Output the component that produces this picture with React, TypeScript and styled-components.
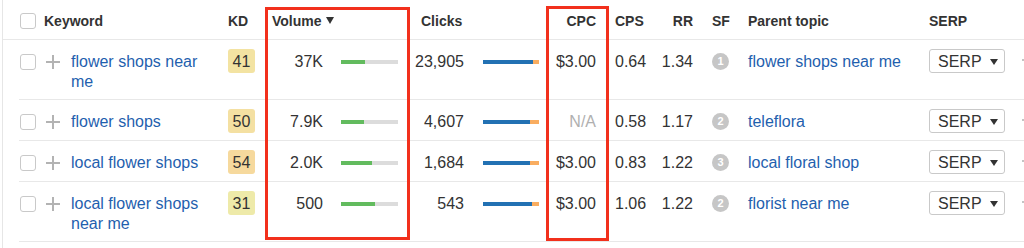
import React from "react";
import styled, { createGlobalStyle } from "styled-components";

const GlobalStyle = createGlobalStyle`
  body {
    margin: 0;
    background: #fff;
    font-family: "Liberation Sans", Arial, sans-serif;
    color: #333;
  }
`;

const COLS =
  "26px 25px 157px 37px 145px 136px 63px 46px 40px 53px 181px 85px 1fr";

const Page = styled.div`
  position: relative;
  width: 1022px;
  height: 248px;
  margin-left: 2px;
  border-left: 1px solid #e6e6e6;
  overflow: hidden;
`;

const HeaderRow = styled.div`
  display: grid;
  grid-template-columns: ${COLS};
  align-items: center;
  height: 40px;
  padding: 2px 0 0 17px;
  box-sizing: border-box;
  border-bottom: 1px solid #e8e8e8;
  font-size: 14px;
  font-weight: bold;
  color: #333;
`;

type HeadProps = { $pl?: number; $pr?: number; $right?: boolean; $span?: number };

const Head = styled.div<HeadProps>`
  padding-left: ${(p) => p.$pl ?? 0}px;
  padding-right: ${(p) => p.$pr ?? 0}px;
  text-align: ${(p) => (p.$right ? "right" : "left")};
  grid-column: ${(p) => (p.$span ? `span ${p.$span}` : "auto")};
  white-space: nowrap;
`;

const SortArrow = styled.span`
  display: inline-block;
  margin-left: 4px;
  width: 0;
  height: 0;
  border-left: 4.5px solid transparent;
  border-right: 4.5px solid transparent;
  border-top: 7px solid #333;
  vertical-align: 2px;
`;

const Body = styled.div`
  margin-left: 16px;
`;

const Row = styled.div`
  display: grid;
  grid-template-columns: ${COLS};
  align-items: start;
  padding: 9px 0 7px 1px;
  border-bottom: 1px solid #e8e8e8;
  font-size: 16px;
  line-height: 20px;
  color: #333;
`;

const Cell = styled.div<HeadProps>`
  padding-top: 3px;
  padding-left: ${(p) => p.$pl ?? 0}px;
  padding-right: ${(p) => p.$pr ?? 0}px;
  text-align: ${(p) => (p.$right ? "right" : "left")};
  white-space: nowrap;
`;

const Checkbox = styled.span<{ $head?: boolean }>`
  display: block;
  width: 14px;
  height: 14px;
  margin-top: ${(p) => (p.$head ? 0 : 2)}px;
  border: 1px solid #c9c9c9;
  border-radius: 3px;
  background: #fff;
`;

const PlusIcon = () => (
  <svg width="14" height="14" viewBox="0 0 14 14" style={{ display: "block", marginTop: 3 }}>
    <path d="M7 0v14M0 7h14" stroke="#b3b3b3" strokeWidth="2" fill="none" />
  </svg>
);

const Link = styled.a`
  color: #1f5fae;
  text-decoration: none;
  white-space: normal;
  display: block;
  padding-top: 3px;
  padding-right: 10px;
`;

const Badge = styled.span<{ $bg: string }>`
  display: inline-block;
  width: 27px;
  height: 24px;
  line-height: 25px;
  text-align: center;
  border-radius: 3px;
  background: ${(p) => p.$bg};
  color: #333;
`;

const Metric = styled.div<{ $numWidth: number; $gap: number }>`
  display: flex;
  align-items: center;
  height: 20px;
  margin-top: 3px;
  gap: ${(p) => p.$gap}px;
  & > span:first-child {
    width: ${(p) => p.$numWidth}px;
    text-align: right;
  }
`;

const Track = styled.div<{ $w: number; $bg: string }>`
  display: flex;
  width: ${(p) => p.$w}px;
  height: 4px;
  background: ${(p) => p.$bg};
  margin-top: 0px;
`;

const Fill = styled.div<{ $color: string }>`
  height: 100%;
  background: ${(p) => p.$color};
`;

const NA = styled.span`
  color: #b0b0b0;
`;

const Circle = styled.span`
  display: flex;
  align-items: center;
  justify-content: center;
  flex: none;
  width: 17px;
  height: 17px;
  margin-top: 4px;
  border-radius: 50%;
  background: #c6c6c6;
  color: #fff;
  font-size: 11px;
  font-weight: bold;
  line-height: 17px;
`;

const SerpButton = styled.button`
  display: flex;
  align-items: center;
  gap: 8px;
  width: 76px;
  height: 24px;
  padding: 1px 0 0 8px;
  border: 1px solid #c9c9c9;
  border-radius: 3px;
  background: #fff;
  font-family: "Liberation Sans", Arial, sans-serif;
  font-size: 16px;
  color: #333;
`;

const Caret = styled.span`
  width: 0;
  height: 0;
  border-left: 4.5px solid transparent;
  border-right: 4.5px solid transparent;
  border-top: 6px solid #333;
`;

const EdgeMark = styled.span`
  display: block;
  width: 4px;
  height: 2px;
  margin: 10px 0 0 8px;
  background: #c4c4c4;
`;

const Highlight = styled.div<{ $left: number; $top: number; $w: number; $h: number }>`
  position: absolute;
  left: ${(p) => p.$left}px;
  top: ${(p) => p.$top}px;
  width: ${(p) => p.$w}px;
  height: ${(p) => p.$h}px;
  box-sizing: border-box;
  border: 3px solid #f2301c;
  pointer-events: none;
`;

type Item = {
  keyword: string;
  kd: number;
  kdBg: string;
  volume: string;
  volFill: number;
  clicks: string;
  clickFill: number;
  cpc: string | null;
  cps: string;
  rr: string;
  sf: number;
  parent: string;
};

const rows: Item[] = [
  { keyword: "flower shops near me", kd: 41, kdBg: "#f3e3a2", volume: "37K", volFill: 24, clicks: "23,905", clickFill: 50, cpc: "$3.00", cps: "0.64", rr: "1.34", sf: 1, parent: "flower shops near me" },
  { keyword: "flower shops", kd: 50, kdBg: "#f4e0a2", volume: "7.9K", volFill: 23, clicks: "4,607", clickFill: 47, cpc: null, cps: "0.58", rr: "1.17", sf: 2, parent: "teleflora" },
  { keyword: "local flower shops", kd: 54, kdBg: "#f6d99d", volume: "2.0K", volFill: 31, clicks: "1,684", clickFill: 47, cpc: "$3.00", cps: "0.83", rr: "1.22", sf: 3, parent: "local floral shop" },
  { keyword: "local flower shops near me", kd: 31, kdBg: "#eeeaa9", volume: "500", volFill: 34, clicks: "543", clickFill: 49, cpc: "$3.00", cps: "1.06", rr: "1.22", sf: 2, parent: "florist near me" },
];

export default function App() {
  return (
    <Page>
      <GlobalStyle />
      <HeaderRow>
        <Head>
          <Checkbox $head />
        </Head>
        <Head $span={2} style={{ marginLeft: -2 }}>Keyword</Head>
        <Head>KD</Head>
        <Head $pl={7}>
          Volume
          <SortArrow />
        </Head>
        <Head $pl={11}>Clicks</Head>
        <Head $right $pr={13}>CPC</Head>
        <Head $pl={6}>CPS</Head>
        <Head $right $pr={2}>RR</Head>
        <Head $pl={17}>SF</Head>
        <Head>Parent topic</Head>
        <Head>SERP</Head>
        <Head />
      </HeaderRow>
      <Body>
        {rows.map((r) => (
          <Row key={r.keyword}>
            <Cell>
              <Checkbox />
            </Cell>
            <Cell>
              <PlusIcon />
            </Cell>
            <Link href="#">{r.keyword}</Link>
            <div>
              <Badge $bg={r.kdBg}>{r.kd}</Badge>
            </div>
            <Metric $numWidth={58} $gap={18}>
              <span>{r.volume}</span>
              <Track $w={57} $bg="#dcdcdc">
                <Fill $color="#62bb5e" style={{ width: r.volFill }} />
              </Track>
            </Metric>
            <Metric $numWidth={54} $gap={19}>
              <span>{r.clicks}</span>
              <Track $w={56} $bg="#f9ad60">
                <Fill $color="#2271b3" style={{ width: r.clickFill }} />
              </Track>
            </Metric>
            <Cell $right $pr={13}>
              {r.cpc ?? <NA>N/A</NA>}
            </Cell>
            <Cell $pl={6}>{r.cps}</Cell>
            <Cell $right $pr={2}>{r.rr}</Cell>
            <Cell $pl={17} style={{ paddingTop: 0 }}>
              <Circle>{r.sf}</Circle>
            </Cell>
            <Link href="#">{r.parent}</Link>
            <div>
              <SerpButton>
                SERP
                <Caret />
              </SerpButton>
            </div>
            <div>
              <EdgeMark />
            </div>
          </Row>
        ))}
      </Body>
      <Highlight $left={262} $top={7} $w={145} $h={233} />
      <Highlight $left={543} $top={6} $w={63} $h={235} />
    </Page>
  );
}
